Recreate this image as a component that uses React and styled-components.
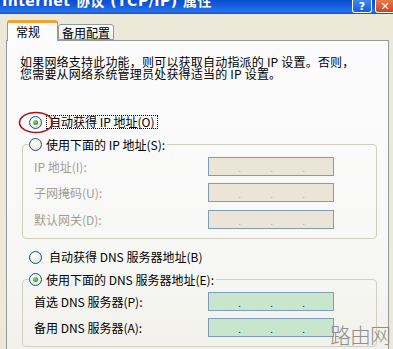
import React from 'react';
import styled, { createGlobalStyle } from 'styled-components';

const GlobalStyle = createGlobalStyle`
  html, body {
    margin: 0;
    padding: 0;
    background: #ece9d8;
  }
  * {
    box-sizing: border-box;
  }
`;

const Window = styled.div`
  position: relative;
  width: 393px;
  height: 349px;
  overflow: hidden;
  background: #ece9d8;
  font-family: 'Noto Sans CJK SC', 'DejaVu Sans', sans-serif;
  font-size: 12px;
  color: #000;
`;

const TitleBar = styled.div`
  display: flex;
  align-items: flex-start;
  height: 14px;
  padding-left: 2px;
  background: linear-gradient(#0a4ccc 0%, #1460e0 45%, #2a72ea 80%, #0d52d4 100%);
  overflow: hidden;
`;

const TitleText = styled.div`
  flex: 1;
  margin-top: -8px;
  font-family: 'DejaVu Sans', 'Noto Sans CJK SC', sans-serif;
  font-weight: bold;
  font-size: 14px;
  line-height: 18px;
  color: #fff;
  letter-spacing: 0.5px;
  white-space: nowrap;
`;

const CaptionButton = styled.div`
  display: flex;
  align-items: center;
  justify-content: center;
  width: 20px;
  height: 13px;
  margin-left: 3px;
  border: 1px solid #fff;
  border-top: none;
  border-radius: 0 0 3px 3px;
  background: ${p => (p.$close ? 'linear-gradient(#e8794f, #d4411a)' : 'linear-gradient(#3d86f0, #1b5ed8)')};
  color: #fff;
  font-family: 'DejaVu Sans', sans-serif;
  font-weight: bold;
  font-size: 11px;
  line-height: 1;
  &:last-child {
    margin-right: -2px;
  }
`;

const Body = styled.div`
  display: flex;
  flex-direction: column;
  padding: 6px 4px 0 6px;
`;

const TabRow = styled.div`
  display: flex;
  align-items: flex-end;
  height: 20px;
  padding-left: 1px;
`;

const Tab = styled.div`
  position: relative;
  z-index: ${p => (p.$active ? 1 : 0)};
  display: flex;
  align-items: center;
  justify-content: ${p => (p.$active ? 'flex-start' : 'center')};
  flex: none;
  width: ${p => (p.$active ? '51px' : '56px')};
  height: ${p => (p.$active ? '21px' : '16px')};
  padding: ${p => (p.$active ? '0 0 2px 8px' : '0')};
  margin-bottom: ${p => (p.$active ? '-1px' : '0')};
  border: 1px solid #919b9c;
  border-top: ${p => (p.$active ? '3px solid #f3a02c' : '1px solid #919b9c')};
  border-bottom: ${p => (p.$active ? 'none' : '1px solid #919b9c')};
  border-radius: 3px 3px 0 0;
  background: ${p => (p.$active ? '#fcfcfe' : 'linear-gradient(#ffffff, #ecebe5)')};
  font-size: 12px;
  white-space: nowrap;
`;

const Panel = styled.div`
  height: 320px;
  padding: 15px 11px 0 13px;
  border: 1px solid #919b9c;
  background: linear-gradient(#fcfcfe 0%, #f7f7f5 70%, #f1f0ea 100%);
`;

const Intro = styled.p`
  margin: 0;
  font-size: 12px;
  line-height: 12px;
  white-space: nowrap;
  letter-spacing: 0.2px;
`;

const RadioRow = styled.label`
  position: relative;
  display: flex;
  align-items: center;
  gap: 4px;
  height: 14px;
  margin-top: ${p => p.$top || 0}px;
  margin-left: 9px;
  font-size: 12px;
  white-space: nowrap;
`;

const RadioDot = styled.span`
  display: inline-flex;
  flex: none;
  align-items: center;
  justify-content: center;
  width: 13px;
  height: 13px;
  border-radius: 50%;
  border: 1px solid #1c5180;
  background: radial-gradient(circle at 40% 35%, #ffffff 0%, #f1efe6 55%, #d7d4c6 100%);
  &::after {
    content: '';
    display: ${p => (p.$checked ? 'block' : 'none')};
    width: 5px;
    height: 5px;
    border-radius: 50%;
    background: radial-gradient(circle at 35% 35%, #8be08b, #21a121 70%);
  }
`;

const RadioText = styled.span`
  padding: 0 2px;
  border: 1px dotted ${p => (p.$focus ? '#000' : 'transparent')};
  line-height: 12px;
`;

const Annotation = styled.svg`
  position: absolute;
  left: -11px;
  top: -4px;
  pointer-events: none;
`;

const Group = styled.fieldset`
  display: flex;
  flex-direction: column;
  gap: 7px;
  min-width: 0;
  margin: ${p => p.$top || 0}px 0 0 2px;
  padding: 6px 0 ${p => p.$bottom || 9}px 0;
  border: 1px solid #d0d0bf;
  border-radius: 4px;
`;

const Legend = styled.legend`
  display: flex;
  margin-left: 6px;
  padding: 0 2px 0 0;
`;

const LegendRow = styled.div`
  display: flex;
  align-items: center;
  gap: 4px;
  height: 14px;
  font-size: 12px;
  white-space: nowrap;
`;

const FieldRow = styled.div`
  display: flex;
  align-items: center;
  height: 19px;
  padding-left: 11px;
  margin-top: ${p => p.$gap || 0}px;
`;

const FieldLabel = styled.span`
  width: 174px;
  color: ${p => (p.$disabled ? '#a19e94' : '#000')};
  white-space: nowrap;
`;

const IpBox = styled.div`
  display: flex;
  align-items: flex-end;
  width: 126px;
  height: 19px;
  padding: 0 0 3px 0;
  border: 1px solid #7f9db9;
  background: ${p => (p.$disabled ? '#ebe5d7' : '#c8e6cd')};
`;

const Octet = styled.span`
  width: 32px;
  text-align: right;
  font-size: 10px;
  line-height: 8px;
  color: ${p => (p.$disabled ? '#b6b2a6' : '#222')};
`;

const Watermark = styled.div`
  position: absolute;
  left: 330px;
  top: 322px;
  font-size: 21px;
  line-height: 24px;
  color: #8e8e8e;
  letter-spacing: -1px;
  font-weight: 300;
`;

const IpField = ({ disabled }) => (
  <IpBox $disabled={disabled}>
    <Octet $disabled={disabled}>.</Octet>
    <Octet $disabled={disabled}>.</Octet>
    <Octet $disabled={disabled}>.</Octet>
  </IpBox>
);

const App = () => {
  return (
    <>
      <GlobalStyle />
      <Window>
        <TitleBar>
          <TitleText>Internet 协议 (TCP/IP) 属性</TitleText>
          <CaptionButton>?</CaptionButton>
          <CaptionButton $close>✕</CaptionButton>
        </TitleBar>
        <Body>
          <TabRow>
            <Tab $active>常规</Tab>
            <Tab>备用配置</Tab>
          </TabRow>
          <Panel>
            <Intro>
              如果网络支持此功能，则可以获取自动指派的 IP 设置。否则，
              <br />
              您需要从网络系统管理员处获得适当的 IP 设置。
            </Intro>

            <RadioRow $top={35}>
              <RadioDot $checked />
              <RadioText $focus>自动获得 IP 地址(O)</RadioText>
              <Annotation width="36" height="24" viewBox="0 0 36 24">
                <ellipse cx="18" cy="11.5" rx="16.5" ry="10" fill="none" stroke="#a8141c" strokeWidth="1.6" />
              </Annotation>
            </RadioRow>

            <Group $top={8}>
              <Legend>
                <LegendRow>
                  <RadioDot />
                  <span>使用下面的 IP 地址(S):</span>
                </LegendRow>
              </Legend>
              <FieldRow>
                <FieldLabel $disabled>IP 地址(I):</FieldLabel>
                <IpField disabled />
              </FieldRow>
              <FieldRow>
                <FieldLabel $disabled>子网掩码(U):</FieldLabel>
                <IpField disabled />
              </FieldRow>
              <FieldRow $gap={1}>
                <FieldLabel $disabled>默认网关(D):</FieldLabel>
                <IpField disabled />
              </FieldRow>
            </Group>

            <RadioRow $top={11}>
              <RadioDot />
              <RadioText>自动获得 DNS 服务器地址(B)</RadioText>
            </RadioRow>

            <Group $top={8} $bottom={9}>
              <Legend>
                <LegendRow>
                  <RadioDot $checked />
                  <span>使用下面的 DNS 服务器地址(E):</span>
                </LegendRow>
              </Legend>
              <FieldRow>
                <FieldLabel>首选 DNS 服务器(P):</FieldLabel>
                <IpField />
              </FieldRow>
              <FieldRow>
                <FieldLabel>备用 DNS 服务器(A):</FieldLabel>
                <IpField />
              </FieldRow>
            </Group>
          </Panel>
        </Body>
        <Watermark>路由网</Watermark>
      </Window>
    </>
  );
};

export default App;
